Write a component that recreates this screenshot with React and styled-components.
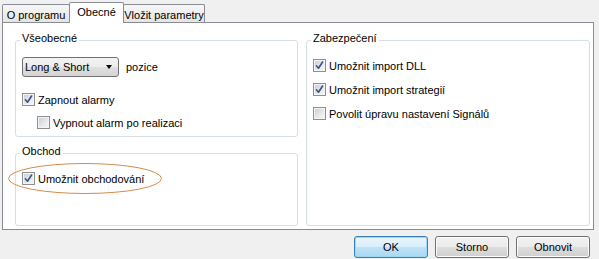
import styled, { createGlobalStyle } from "styled-components";

const GlobalStyle = createGlobalStyle`
  html, body {
    margin: 0;
    padding: 0;
    background: #f0f0f0;
  }
  body {
    font-family: "Liberation Sans", Arial, sans-serif;
    font-size: 11px;
    color: #000;
  }
`;

const Check = ({ checked }) => (
  <CheckBox>
    {checked && (
      <svg width="11" height="11" viewBox="0 0 11 11">
        <path d="M2.4 5.8 L4.5 8.2 L8.6 2" fill="none" stroke="#3d5189" strokeWidth="1.6" strokeLinecap="round" strokeLinejoin="round" />
      </svg>
    )}
  </CheckBox>
);

const Option = ({ checked, indent, children }) => (
  <OptionRow $indent={indent}>
    <Check checked={checked} />
    <span>{children}</span>
  </OptionRow>
);

const App = () => {
  return (
    <Window>
      <GlobalStyle />
      <TabStrip>
        <Tab $width={68}>O programu</Tab>
        <Tab $width={55} $active>Obecné</Tab>
        <Tab $width={82}>Vložit parametry</Tab>
      </TabStrip>

      <Panel>
        <Column>
          <Group $height={105}>
            <Legend>Všeobecné</Legend>
            <SelectRow>
              <Select>
                Long &amp; Short
                <Arrow />
              </Select>
              <span>pozice</span>
            </SelectRow>
            <Options $top={16} $gap={10}>
              <Option checked>Zapnout alarmy</Option>
              <Option indent>Vypnout alarm po realizaci</Option>
            </Options>
          </Group>

          <Group $height={81}>
            <Legend>Obchod</Legend>
            <Options $top={11}>
              <Highlighted>
                <Option checked>Umožnit obchodování</Option>
                <Ring viewBox="0 0 156 33">
                  <ellipse cx="78" cy="16.5" rx="76.5" ry="15" fill="none" stroke="#d58b4b" strokeWidth="1" />
                </Ring>
              </Highlighted>
            </Options>
          </Group>
        </Column>

        <Group $height={194}>
          <Legend>Zabezpečení</Legend>
          <Options $top={11} $gap={11}>
            <Option checked>Umožnit import DLL</Option>
            <Option checked>Umožnit import strategií</Option>
            <Option>Povolit úpravu nastavení Signálů</Option>
          </Options>
        </Group>
      </Panel>

      <Footer>
        <Button $default>OK</Button>
        <Button>Storno</Button>
        <Button>Obnovit</Button>
      </Footer>
    </Window>
  );
};

const Window = styled.div`
  width: 599px;
  height: 259px;
  box-sizing: border-box;
  padding-left: 2px;
  overflow: hidden;
`;

const TabStrip = styled.div`
  display: flex;
  align-items: flex-end;
  height: 22px;
`;

const Tab = styled.div`
  position: relative;
  box-sizing: border-box;
  width: ${(p) => p.$width}px;
  height: ${(p) => (p.$active ? 21 : 18)}px;
  margin-bottom: ${(p) => (p.$active ? -1 : 0)}px;
  & + & {
    margin-left: -1px;
  }
  padding-top: ${(p) => (p.$active ? 2 : 3)}px;
  line-height: 14px;
  text-align: center;
  white-space: nowrap;
  border: 1px solid #898c95;
  border-bottom: none;
  border-radius: 2px 2px 0 0;
  background: ${(p) => (p.$active ? "#ffffff" : "linear-gradient(#f7f7f7, #e4e4e4)")};
  z-index: ${(p) => (p.$active ? 2 : 1)};
`;

const Panel = styled.div`
  box-sizing: border-box;
  width: 592px;
  height: 208px;
  border: 1px solid #898c95;
  background: #fff;
  padding: 9px 3px 0 12px;
  display: grid;
  grid-template-columns: 283px 284px;
  column-gap: 8px;
  align-items: start;
`;

const Column = styled.div`
  display: flex;
  flex-direction: column;
  gap: 8px;
`;

const Group = styled.fieldset`
  box-sizing: border-box;
  height: ${(p) => p.$height}px;
  margin: 0;
  padding: 0 6px;
  min-width: 0;
  border: 1px solid #d5dfe5;
  border-radius: 3px;
`;

const Legend = styled.legend`
  margin-left: -2px;
  padding: 0 2px 3px;
  line-height: 13px;
  font-size: 11px;
`;

const SelectRow = styled.div`
  display: flex;
  align-items: center;
  gap: 7px;
  margin-top: 9px;
`;

const Select = styled.div`
  box-sizing: border-box;
  width: 97px;
  height: 20px;
  display: flex;
  align-items: center;
  justify-content: space-between;
  padding: 0 6px 0 2px;
  border: 1px solid #707070;
  border-radius: 3px;
  background: linear-gradient(#f3f3f3 0%, #ececec 50%, #dfdfdf 51%, #d4d4d4 100%);
`;

const Arrow = styled.span`
  width: 0;
  height: 0;
  border-left: 3.5px solid transparent;
  border-right: 3.5px solid transparent;
  border-top: 4px solid #000;
`;

const Options = styled.div`
  display: flex;
  flex-direction: column;
  gap: ${(p) => p.$gap || 0}px;
  margin-top: ${(p) => p.$top}px;
`;

const OptionRow = styled.label`
  display: flex;
  align-items: center;
  gap: 3px;
  height: 13px;
  line-height: 12px;
  margin-left: ${(p) => (p.$indent ? 15 : 0)}px;
  white-space: nowrap;
`;

const CheckBox = styled.span`
  box-sizing: border-box;
  flex: none;
  width: 13px;
  height: 13px;
  display: flex;
  align-items: center;
  justify-content: center;
  border: 1px solid #8e8f8f;
  box-shadow: inset 0 0 0 1px #f4f4f4;
  background: linear-gradient(135deg, #c6cbd1 0%, #e6e8ea 55%, #f7f7f7 100%);
`;

const Highlighted = styled.div`
  position: relative;
`;

const Ring = styled.svg`
  position: absolute;
  left: -15px;
  top: -10px;
  width: 156px;
  height: 33px;
  pointer-events: none;
`;

const Footer = styled.div`
  display: flex;
  justify-content: flex-end;
  gap: 7px;
  padding: 6px 9px 0 0;
`;

const Button = styled.button`
  box-sizing: border-box;
  width: 74px;
  height: 22px;
  padding: 0;
  font-family: "Liberation Sans", Arial, sans-serif;
  font-size: 11px;
  color: #000;
  border: 1px solid ${(p) => (p.$default ? "#3c7fb1" : "#707070")};
  border-radius: 3px;
  background: ${(p) =>
    p.$default
      ? "linear-gradient(#eaf5fc 0%, #d9eefa 50%, #bfe2f7 51%, #a9d8f3 100%)"
      : "linear-gradient(#f2f2f2 0%, #ebebeb 50%, #dddddd 51%, #cfcfcf 100%)"};
  box-shadow: inset 0 0 0 1px ${(p) => (p.$default ? "#9ed6f6" : "#fcfcfc")};
`;

export default App;
